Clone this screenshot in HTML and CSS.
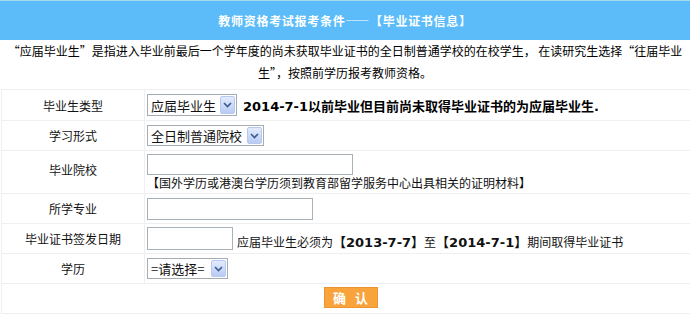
FILE: index.html
```html
<!DOCTYPE html>
<html lang="zh-CN">
<head>
<meta charset="utf-8">
<title>教师资格考试报考条件</title>
<link rel="stylesheet" href="styles.css">
</head>
<body>
<div class="page">
  <div class="header">教师资格考试报考条件——【毕业证书信息】</div>
  <p class="intro">“应届毕业生”是指进入毕业前最后一个学年度的尚未获取毕业证书的全日制普通学校的在校学生， 在读研究生选择“往届毕业生”，按照前学历报考教师资格。</p>
  <form class="form">
    <div class="row r1">
      <div class="label">毕业生类型</div>
      <div class="field">
        <span class="sel w1"><select><option>应届毕业生</option></select><span class="arrow"><svg width="9" height="6" viewBox="0 0 9 6"><path d="M1 1 L4.5 4.5 L8 1" fill="none" stroke="#3b5a8f" stroke-width="1.6"/></svg></span></span>
        <b class="tip">2014-7-1以前毕业但目前尚未取得毕业证书的为应届毕业生.</b>
      </div>
    </div>
    <div class="row r2">
      <div class="label">学习形式</div>
      <div class="field">
        <span class="sel w2"><select><option>全日制普通院校</option></select><span class="arrow"><svg width="9" height="6" viewBox="0 0 9 6"><path d="M1 1 L4.5 4.5 L8 1" fill="none" stroke="#3b5a8f" stroke-width="1.6"/></svg></span></span>
      </div>
    </div>
    <div class="row r3">
      <div class="label">毕业院校</div>
      <div class="field school">
        <input class="txt i1" type="text">
        <div class="note">【国外学历或港澳台学历须到教育部留学服务中心出具相关的证明材料】</div>
      </div>
    </div>
    <div class="row r4">
      <div class="label">所学专业</div>
      <div class="field"><input class="txt i2" type="text"></div>
    </div>
    <div class="row r5">
      <div class="label">毕业证书签发日期</div>
      <div class="field"><input class="txt i3" type="text"><span class="date-note">应届毕业生必须为<b>【2013-7-7】</b>至<b>【2014-7-1】</b>期间取得毕业证书</span></div>
    </div>
    <div class="row r6">
      <div class="label">学历</div>
      <div class="field">
        <span class="sel w3"><select><option>=请选择=</option></select><span class="arrow"><svg width="9" height="6" viewBox="0 0 9 6"><path d="M1 1 L4.5 4.5 L8 1" fill="none" stroke="#3b5a8f" stroke-width="1.6"/></svg></span></span>
      </div>
    </div>
    <div class="row r7">
      <div class="actions"><button class="ok" type="button">确 认</button></div>
    </div>
  </form>
</div>
</body>
</html>
```
FILE: styles.css
```css
html, body {
  margin: 0;
  padding: 0;
  background: #ffffff;
}
body {
  font-family: "Noto Sans CJK SC", "DejaVu Sans", sans-serif;
  font-size: 12px;
  color: #111;
}
.page {
  width: 690px;
}
.header {
  height: 39px;
  border-top: 1px solid #a3dbee;
  background: #5bbcf9;
  color: #ffffff;
  font-weight: bold;
  font-size: 12px;
  letter-spacing: 0.7px;
  line-height: 39px;
  text-align: center;
}
.intro {
  margin: 0;
  padding: 0 3px;
  height: 49px;
  box-sizing: border-box;
  line-height: 22px;
  text-align: center;
  font-size: 12px;
  color: #000;
}
.form {
  display: block;
  margin: 0 0 0 1px;
  width: 689px;
  border-top: 1px solid #efefef;
  border-left: 1px solid #efefef;
}
.row {
  display: grid;
  grid-template-columns: 143px 1fr;
  box-sizing: border-box;
  height: 30px;
  border-bottom: 1px solid #efefef;
}
.r1 { height: 31px; }
.r3 { height: 43px; }
.r7 { grid-template-columns: 1fr; }
.label {
  display: flex;
  align-items: center;
  justify-content: center;
  border-right: 1px solid #efefef;
  font-size: 12px;
}
.r3 .label { padding-bottom: 6px; }
.field {
  display: flex;
  align-items: center;
  padding-left: 2px;
  white-space: nowrap;
}
.school {
  flex-direction: column;
  align-items: flex-start;
  padding-top: 3px;
}
.sel {
  position: relative;
  display: inline-block;
  box-sizing: border-box;
  border: 1px solid #a5acb2;
  background: #fff;
}
.sel select {
  -webkit-appearance: none;
  appearance: none;
  border: 0;
  outline: 0;
  background: transparent;
  font-family: "Noto Sans CJK SC", sans-serif;
  font-size: 13px;
  color: #111;
  padding: 0 0 0 3px;
  margin: 0;
  width: 100%;
  height: 100%;
  display: block;
}
.sel .arrow {
  position: absolute;
  right: 1px;
  top: 1px;
  bottom: 1px;
  width: 15px;
  box-sizing: border-box;
  border: 1px solid #b7c9f1;
  border-radius: 2px;
  background: linear-gradient(#e3ebfd, #b9cbf4);
  display: flex;
  align-items: center;
  justify-content: center;
}
.w1 { width: 90px; height: 22px; }
.w2 { width: 117px; height: 21px; }
.w3 { width: 81px; height: 21px; }
.tip {
  font-family: "DejaVu Sans", "Noto Sans CJK SC", sans-serif;
  font-size: 13px;
  font-weight: bold;
  margin-left: 6px;
  color: #000;
}
.txt {
  box-sizing: border-box;
  border: 1px solid #a9b1b8;
  height: 22px;
  margin: 0;
  padding: 0 2px;
  font-size: 12px;
  background: #fff;
}
.i1 { width: 206px; height: 21px; }
.i2 { width: 166px; }
.i3 { width: 86px; height: 23px; }
.note {
  font-size: 12px;
  line-height: 16px;
}
.date-note {
  font-size: 12px;
  margin-left: 4px;
  padding-top: 5px;
}
.date-note b {
  font-family: "DejaVu Sans", "Noto Sans CJK SC", sans-serif;
  font-size: 13px;
  font-weight: bold;
}
.actions {
  display: flex;
  align-items: center;
  justify-content: center;
  padding-left: 8px;
  padding-bottom: 3px;
}
.ok {
  width: 54px;
  height: 21px;
  border: 1px solid #eb9530;
  background: #f8a33b;
  color: #fff;
  font-family: "Noto Sans CJK SC", sans-serif;
  font-weight: bold;
  font-size: 13px;
  letter-spacing: 3px;
  padding: 0 0 0 3px;
  line-height: 19px;
  cursor: pointer;
}
```
